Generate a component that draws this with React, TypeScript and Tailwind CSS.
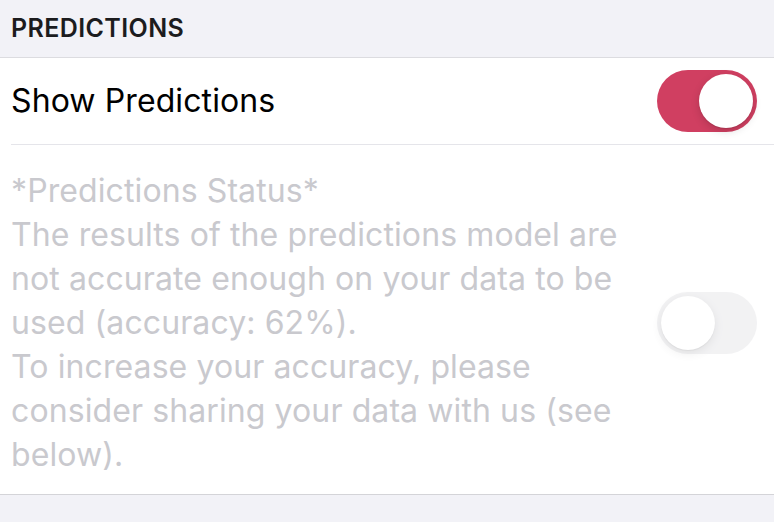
import React from "react";

// ── Static content ────────────────────────────────────────────────────────────

const STATUS_LINES = [
  "*Predictions Status*",
  "The results of the predictions model are",
  "not accurate enough on your data to be",
  "used (accuracy: 62%).",
  "To increase your accuracy, please",
  "consider sharing your data with us (see",
  "below).",
];

// ── Component ─────────────────────────────────────────────────────────────────

export default function App() {
  return (
    <div
      className="w-[774px] h-[522px] bg-[#f2f2f7] overflow-hidden"
      style={{ fontFamily: "Inter, 'Noto Sans', sans-serif" }}
    >
      {/* Section header */}
      <div className="h-[58px] flex items-center px-[11px] border-b border-[#dcdce0]">
        <span className="text-[25px] font-semibold tracking-[0.4px] text-[#1c1c1e]">
          PREDICTIONS
        </span>
      </div>

      <div className="bg-white border-b border-[#d4d4d8]">
        {/* Show Predictions row */}
        <div className="ml-[11px] h-[87px] flex items-center justify-between pr-[17px] border-b border-[#e5e5ea]">
          <span className="text-[32px] text-black tracking-[0.1px]">
            Show Predictions
          </span>
          <Toggle on />
        </div>

        {/* Disabled status row */}
        <div className="pl-[11px] pr-[17px] pt-[24px] pb-[17px] flex items-center justify-between">
          <div className="text-[32px] leading-[44px] text-[#c9c9ce] tracking-[0.1px]">
            {STATUS_LINES.map((l) => (
              <div key={l}>{l}</div>
            ))}
          </div>
          <div className="opacity-50">
            <Toggle on={false} />
          </div>
        </div>
      </div>
    </div>
  );
}

// ── Helpers ───────────────────────────────────────────────────────────────────

function Toggle({ on }: { on: boolean }) {
  return (
    <div
      className={`w-[100px] h-[62px] rounded-full p-[4px] flex ${
        on ? "bg-[#d03f61] justify-end" : "bg-[#e6e6e9] justify-start"
      }`}
    >
      <div className="w-[54px] h-[54px] rounded-full bg-white shadow-[0_3px_8px_rgba(0,0,0,0.15),0_1px_1px_rgba(0,0,0,0.1)]" />
    </div>
  );
}
